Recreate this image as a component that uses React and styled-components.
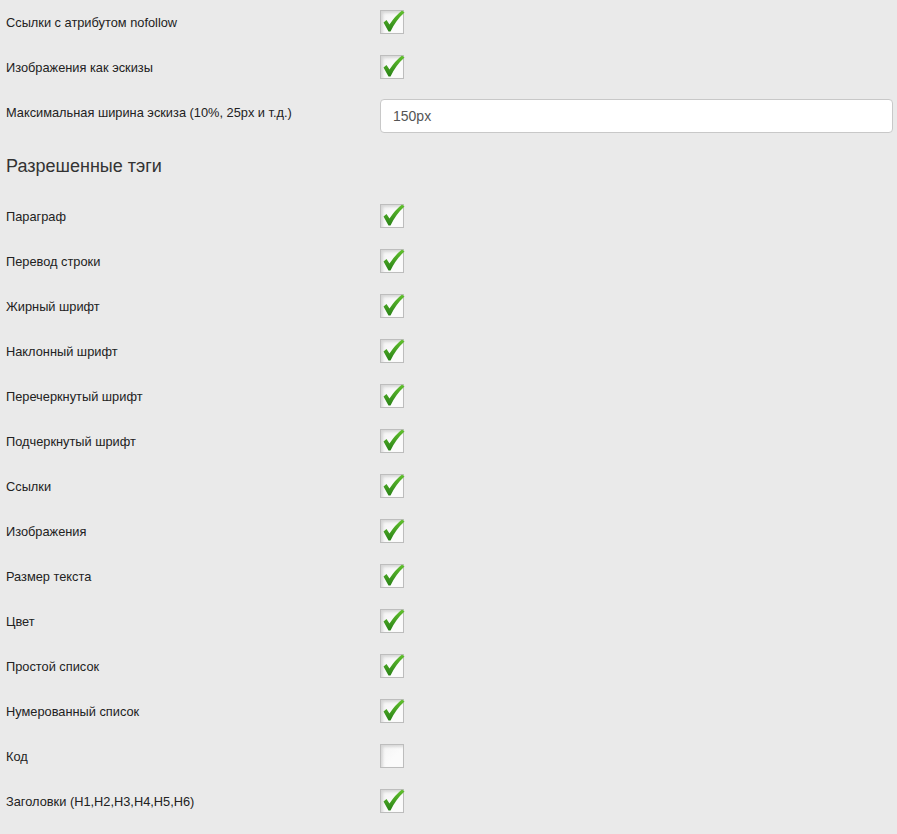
import React from "react"
import styled, { createGlobalStyle } from "styled-components"

const GlobalStyle = createGlobalStyle`
	html, body {
		margin: 0;
		padding: 0;
		background: #eaeaea;
	}
	body {
		font-family: "Liberation Sans", Arial, sans-serif;
		color: #222;
	}
`

const Page = styled.div`
	width: 897px;
	min-height: 834px;
	background: #eaeaea;
`

const Row = styled.div`
	display: grid;
	grid-template-columns: 374px 1fr;
	align-items: center;
	height: ${p => p.tall ? 52 : 45}px;
	padding-left: 6px;
	padding-right: 4px;
	box-sizing: border-box;
`

const Label = styled.span`
	font-size: 12.8px;
	line-height: 16px;
	color: #222;
	${p => p.shift && `margin-top: -6px;`}
`

const Heading = styled.h3`
	margin: 0;
	height: 52px;
	display: flex;
	align-items: center;
	padding: 0 0 4px 6px;
	box-sizing: border-box;
	font-size: 18px;
	font-weight: normal;
	color: #333;
`

const Box = styled.span`
	position: relative;
	display: block;
	width: 24px;
	height: 24px;
	box-sizing: border-box;
	border: 1px solid #bdbdbd;
	background: linear-gradient(135deg, #f4f4f4, #fbfbfb 60%);
	box-shadow: inset 2px 2px 3px rgba(0, 0, 0, 0.13);
	margin-top: -1px;

	svg {
		position: absolute;
		left: 0;
		top: -1px;
		overflow: visible;
	}
`

const TextInput = styled.input`
	width: 100%;
	height: 34px;
	box-sizing: border-box;
	border: 1px solid #c8c8c8;
	border-radius: 4px;
	background: #fff;
	padding: 0 12px;
	font-family: "Liberation Sans", Arial, sans-serif;
	font-size: 14px;
	color: #555;
	outline: none;
`

const Check = ({ on }) => (
	<Box>
		{on && (
			<svg width="24" height="24" viewBox="0 0 24 24">
				<defs>
					<linearGradient id="tick" x1="0" y1="0" x2="0" y2="1">
						<stop offset="0" stopColor="#62c22e" />
						<stop offset="1" stopColor="#2a8217" />
					</linearGradient>
				</defs>
				<path d="M2.5 12.5 L5.5 10 L8.5 14.5 Q14 6 21 0.5 L23.5 2.5 Q15 10 9.5 21.5 L7.5 21.5 Z" fill="url(#tick)" />
			</svg>
		)}
	</Box>
)

const tags = [
	["Параграф", true],
	["Перевод строки", true],
	["Жирный шрифт", true],
	["Наклонный шрифт", true],
	["Перечеркнутый шрифт", true],
	["Подчеркнутый шрифт", true],
	["Ссылки", true],
	["Изображения", true],
	["Размер текста", true],
	["Цвет", true],
	["Простой список", true],
	["Нумерованный список", true],
	["Код", false],
	["Заголовки (H1,H2,H3,H4,H5,H6)", true],
]

export default function App() {
	return (
		<Page>
			<GlobalStyle />
			<Row>
				<Label>Ссылки с атрибутом nofollow</Label>
				<Check on />
			</Row>
			<Row>
				<Label>Изображения как эскизы</Label>
				<Check on />
			</Row>
			<Row tall>
				<Label shift>Максимальная ширина эскиза (10%, 25px и т.д.)</Label>
				<TextInput defaultValue="150px" />
			</Row>
			<Heading>Разрешенные тэги</Heading>
			{tags.map(([name, on]) => (
				<Row key={name}>
					<Label>{name}</Label>
					<Check on={on} />
				</Row>
			))}
		</Page>
	)
}
